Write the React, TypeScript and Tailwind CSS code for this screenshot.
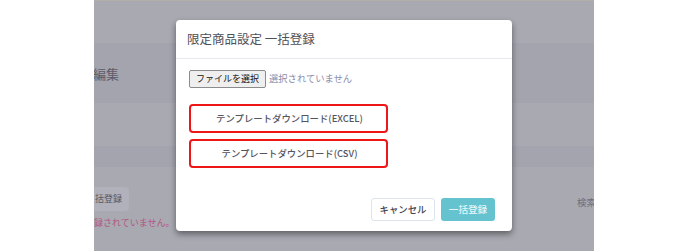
export default function App() {
  return (
    <div className="flex w-[688px] h-[251px] bg-white font-['Noto_Sans_CJK_JP','Noto_Sans',sans-serif]">
      <div className="w-[94px]" />

      {/* Dimmed page behind the dialog */}
      <div className="relative w-[500px] h-full overflow-hidden bg-[#a9a9b2] border-t border-[#b3aea8]">
        <div className="flex flex-col h-full">
          <div className="h-[42px]" />
          <div className="h-[60px] bg-[#a4a4ae] flex items-center">
            <span className="text-[13px] leading-none text-[#5c5c6a] -ml-[1px]">編集</span>
          </div>
          <div className="h-[43px]" />
          <div className="h-[21px] bg-[#a4a4ae]" />
          <div className="flex items-start justify-between pt-[20px]">
            <div className="flex flex-col">
              <div className="w-[35px] h-[24px] rounded-r-[4px] bg-[#b0b1bb] flex items-center">
                <span className="text-[9px] text-[#55555f] whitespace-nowrap pl-[1px]">括登録</span>
              </div>
              <span className="mt-[7px] text-[9px] leading-none text-[#b35680] whitespace-nowrap">録されていません。</span>
            </div>
            <span className="mt-[8px] text-[9.5px] text-[#6d6e7c] whitespace-nowrap w-[17px]">検索</span>
          </div>
        </div>

        {/* Dialog */}
        <div className="absolute left-[82px] top-[19px] w-[336px] h-[211px] bg-white rounded-[4px] shadow-[0_3px_6px_rgba(0,0,0,0.45)] flex flex-col">
          <div className="h-[39px] border-b border-[#e8e8ec] flex items-center pl-[11px]">
            <span className="text-[12.5px] text-[#505058] whitespace-nowrap">限定商品設定 一括登録</span>
          </div>

          <div className="flex flex-col pl-[13px] pt-[11px]">
            <div className="flex items-center h-[18px]">
              <div className="h-[18px] px-[6px] bg-[#efefef] border border-[#8c8c8c] rounded-[2px] flex items-center">
                <span className="text-[9px] text-[#111] whitespace-nowrap">ファイルを選択</span>
              </div>
              <span className="ml-[3px] text-[9.3px] text-[#8c8ca8] whitespace-nowrap">選択されていません</span>
            </div>

            <div className="mt-[16px] flex flex-col gap-[6px]">
              <div className="w-[199px] h-[29px] border-2 border-[#ee1616] rounded-[4px] flex items-center justify-center">
                <span className="text-[9.4px] font-medium text-[#55555f] whitespace-nowrap pl-[2px]">テンプレートダウンロード(EXCEL)</span>
              </div>
              <div className="w-[199px] h-[29px] border-2 border-[#ee1616] rounded-[4px] flex items-center justify-center">
                <span className="text-[9.4px] font-medium text-[#55555f] whitespace-nowrap pl-[2px]">テンプレートダウンロード(CSV)</span>
              </div>
            </div>
          </div>

          <div className="mt-auto flex justify-end gap-[6px] pr-[17px] pb-[10px]">
            <div className="w-[64px] h-[23px] border border-[#dde4ee] rounded-[3px] bg-white flex items-center justify-center">
              <span className="text-[9.4px] font-medium text-[#444450] whitespace-nowrap">キャンセル</span>
            </div>
            <div className="w-[54px] h-[23px] rounded-[3px] bg-[#64c3cf] flex items-center justify-center">
              <span className="text-[9.6px] font-medium text-[#e6f6f8] whitespace-nowrap">一括登録</span>
            </div>
          </div>
        </div>
      </div>

      <div className="flex-1" />
    </div>
  )
}
